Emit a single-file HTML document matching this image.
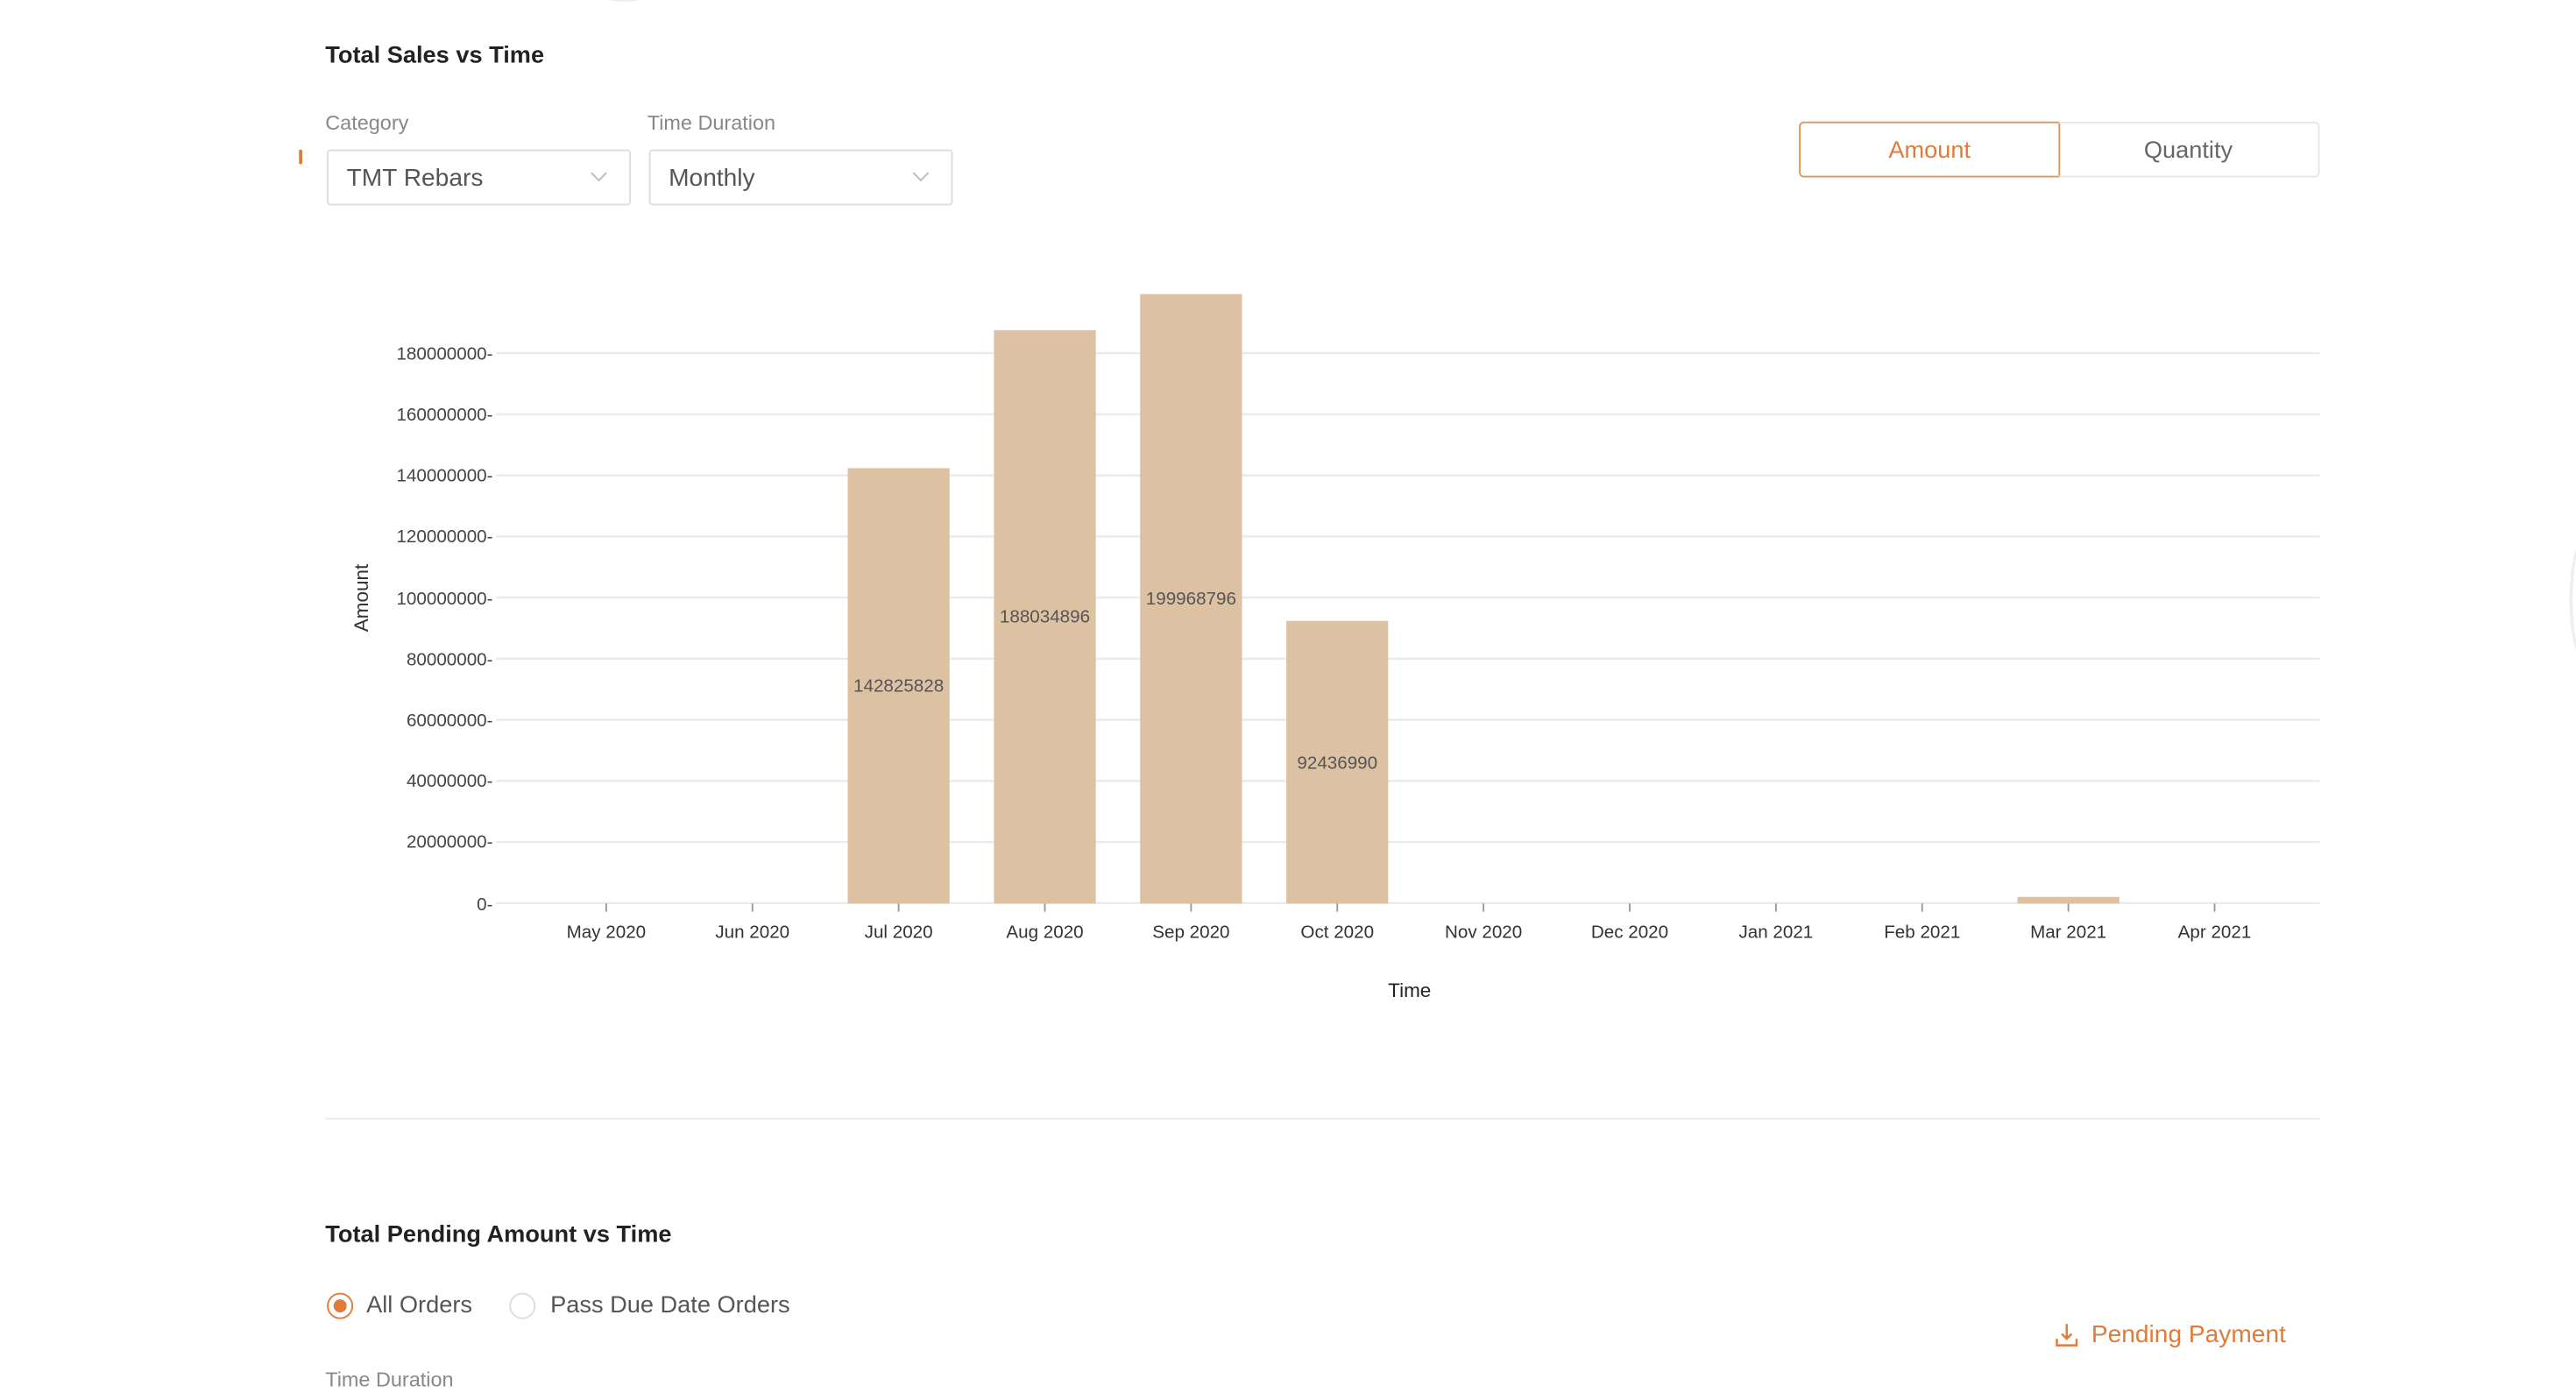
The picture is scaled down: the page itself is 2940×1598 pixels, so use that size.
<!DOCTYPE html>
<html><head><meta charset="utf-8"><style>
html,body{margin:0;padding:0;background:#fff;overflow:hidden}
body{width:2940px;height:1596px}
#w{position:absolute;left:0;top:0;width:1568px;height:852px;transform:scale(1.875);transform-origin:0 0;font-family:"Liberation Sans",sans-serif}
.a{position:absolute;white-space:nowrap}
.t{font-weight:bold;font-size:14.5px;color:#222}
.lbl{font-size:12.5px;color:#888}
.sel{position:absolute;border:1px solid #ddd;border-radius:2px;height:32px;width:184px;box-sizing:border-box;font-size:15px;color:#555;line-height:33px;padding-left:11px}
.sel:after{content:"";position:absolute;right:15px;top:10px;width:6px;height:6px;border-right:1px solid #bbb;border-bottom:1px solid #bbb;transform:rotate(45deg)}
.btn{position:absolute;top:74px;height:34px;box-sizing:border-box;font-size:14.5px;text-align:center;line-height:34px}
</style></head><body><div id="w">
<div class="a" style="left:365px;top:-8px;width:30px;height:9px;border-radius:50%;background:#ddd;opacity:.5"></div>
<div class="a" style="left:1564px;top:325px;width:20px;height:80px;border-left:2px solid #eee;border-radius:50%"></div>
<div class="a t" style="left:198px;top:26px">Total Sales vs Time</div>
<div class="a lbl" style="left:198px;top:68px">Category</div>
<div class="a lbl" style="left:394px;top:68px">Time Duration</div>
<div class="a" style="left:182px;top:91px;width:2px;height:9px;background:#e07b39;border-radius:2px"></div>
<div class="sel" style="left:199px;top:91px;width:185px;height:34px">TMT Rebars</div>
<div class="sel" style="left:395px;top:91px;width:185px;height:34px">Monthly</div>
<div class="btn" style="left:1095px;width:159px;border:1px solid #e3925e;border-radius:3px 0 0 3px;color:#e07b39">Amount</div>
<div class="btn" style="left:1253px;width:159px;border:1px solid #e6e6e6;border-left:none;border-radius:0 3px 3px 0;color:#666">Quantity</div>
<svg class="a" style="left:0;top:0" width="1568" height="700" font-family="Liberation Sans, sans-serif">
<g stroke="#ebebeb" stroke-width="1.3">
<line x1="302" x2="1412" y1="215" y2="215"/><line x1="302" x2="1412" y1="252.2" y2="252.2"/><line x1="302" x2="1412" y1="289.4" y2="289.4"/><line x1="302" x2="1412" y1="326.6" y2="326.6"/><line x1="302" x2="1412" y1="363.8" y2="363.8"/><line x1="302" x2="1412" y1="401" y2="401"/><line x1="302" x2="1412" y1="438.2" y2="438.2"/><line x1="302" x2="1412" y1="475.4" y2="475.4"/><line x1="302" x2="1412" y1="512.6" y2="512.6"/><line x1="302" x2="1412" y1="549.8" y2="549.8"/>
</g>
<g font-size="11" fill="#444" text-anchor="end">
<text x="300" y="219">180000000-</text><text x="300" y="256">160000000-</text><text x="300" y="293">140000000-</text><text x="300" y="330">120000000-</text><text x="300" y="368">100000000-</text><text x="300" y="405">80000000-</text><text x="300" y="442">60000000-</text><text x="300" y="479">40000000-</text><text x="300" y="516">20000000-</text><text x="300" y="554">0-</text>
</g>
<text x="224" y="364" font-size="12" fill="#333" text-anchor="middle" transform="rotate(-90 224 364)">Amount</text>
<g fill="#dcc1a3">
<rect x="516" y="285" width="62" height="265"/><rect x="605" y="201" width="62" height="349"/><rect x="694" y="179" width="62" height="371"/><rect x="783" y="378" width="62" height="172"/><rect x="1228" y="546" width="62" height="4"/>
</g>
<g font-size="11" fill="#555" text-anchor="middle">
<text x="547" y="421">142825828</text><text x="636" y="379">188034896</text><text x="725" y="368">199968796</text><text x="814" y="468">92436990</text>
</g>
<g stroke="#999" stroke-width="1"><line x1="369" x2="369" y1="550" y2="555"/><line x1="458" x2="458" y1="550" y2="555"/><line x1="547" x2="547" y1="550" y2="555"/><line x1="636" x2="636" y1="550" y2="555"/><line x1="725" x2="725" y1="550" y2="555"/><line x1="814" x2="814" y1="550" y2="555"/><line x1="903" x2="903" y1="550" y2="555"/><line x1="992" x2="992" y1="550" y2="555"/><line x1="1081" x2="1081" y1="550" y2="555"/><line x1="1170" x2="1170" y1="550" y2="555"/><line x1="1259" x2="1259" y1="550" y2="555"/><line x1="1348" x2="1348" y1="550" y2="555"/></g>
<g font-size="11" fill="#333" text-anchor="middle">
<text x="369" y="571">May 2020</text><text x="458" y="571">Jun 2020</text><text x="547" y="571">Jul 2020</text><text x="636" y="571">Aug 2020</text><text x="725" y="571">Sep 2020</text><text x="814" y="571">Oct 2020</text><text x="903" y="571">Nov 2020</text><text x="992" y="571">Dec 2020</text><text x="1081" y="571">Jan 2021</text><text x="1170" y="571">Feb 2021</text><text x="1259" y="571">Mar 2021</text><text x="1348" y="571">Apr 2021</text>
</g>
<text x="858" y="607" font-size="12" fill="#222" text-anchor="middle">Time</text>
<line x1="198" x2="1412" y1="681" y2="681" stroke="#eee" stroke-width="1.3"/>
</svg>
<div class="a t" style="left:198px;top:744px">Total Pending Amount vs Time</div>
<div class="a" style="left:199px;top:787px;width:16px;height:16px;box-sizing:border-box;border:1.5px solid #e07b39;border-radius:50%"></div>
<div class="a" style="left:203px;top:791px;width:8px;height:8px;background:#e07b39;border-radius:50%"></div>
<div class="a" style="left:223px;top:787px;font-size:14.5px;color:#555">All Orders</div>
<div class="a" style="left:310px;top:787px;width:16px;height:16px;box-sizing:border-box;border:1px solid #ddd;border-radius:50%"></div>
<div class="a" style="left:335px;top:787px;font-size:14.5px;color:#555">Pass Due Date Orders</div>
<svg class="a" style="left:1250px;top:805px" width="16" height="16" fill="none" stroke="#e07b39" stroke-width="1.3"><path d="M8 1v9M5 7l3 3 3-3M2 10v4h12v-4"/></svg>
<div class="a" style="left:1273px;top:804px;font-size:15px;color:#e07b39">Pending Payment</div>
<div class="a lbl" style="left:198px;top:833px">Time Duration</div>
</div></body></html>
